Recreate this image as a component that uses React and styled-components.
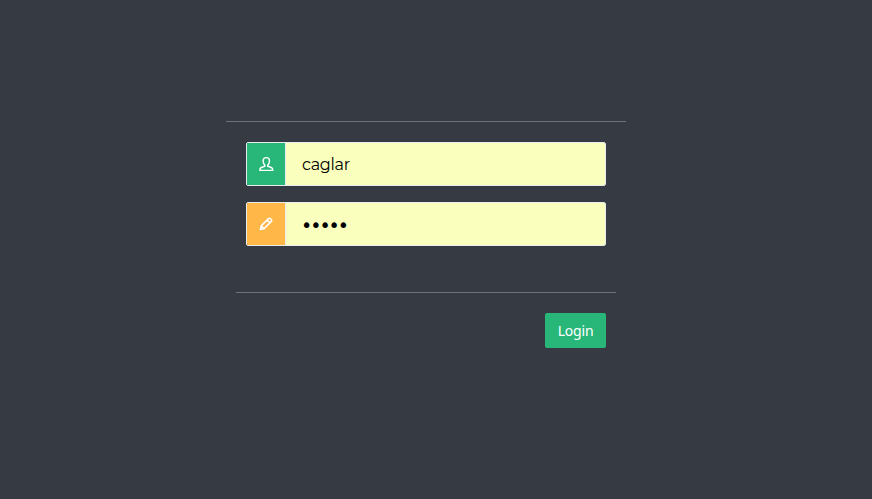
import React from "react";
import styled, { createGlobalStyle } from "styled-components";

const GlobalStyle = createGlobalStyle`
  * { box-sizing: border-box; }
  body { margin: 0; background: #363a42; font-family: "Noto Sans", sans-serif; }
`;

const Page = styled.main`
  height: 499px;
  padding: 121px 0 0 226px;
  background: #363a42;
`;

const LoginBox = styled.form`
  width: 400px;
  border-top: 1px solid #6c737e;
`;

const Fields = styled.div`
  display: grid;
  gap: 16px;
  padding: 20px 20px 0;
`;

const InputGroup = styled.label`
  display: flex;
  height: 44px;
  border: 1px solid #e9ecef;
  border-radius: 2px;
  overflow: hidden;
`;

const Addon = styled.span`
  display: flex;
  align-items: center;
  justify-content: center;
  width: 38px;
  flex: none;
  color: #fff;
  background: ${({ $color }) => $color};
`;

const Input = styled.input`
  flex: 1;
  min-width: 0;
  height: 42px;
  padding: 0 16px;
  border: 0;
  border-left: 1px solid #e9ecef;
  outline: 0;
  border-radius: 0;
  background: #faffbd;
  color: #000;
  font-family: Montserrat, "Open Sans", sans-serif;
  font-size: 16px;
  letter-spacing: -0.3px;
`;

const PasswordInput = styled(Input)`
  padding: 2px 15px 0;
  font-family: "DejaVu Sans", sans-serif;
  font-size: 19px;
  letter-spacing: -2px;
`;

const Actions = styled.div`
  display: flex;
  justify-content: flex-end;
  margin: 46px 10px 0;
  padding: 20px 10px;
  border-top: 1px solid #6c737e;
`;

const Button = styled.button`
  width: 61px;
  height: 35px;
  padding: 0 0 1px;
  border: 0;
  border-radius: 2px;
  background: #28b779;
  color: #fff;
  font: 14px "Noto Sans", sans-serif;
  letter-spacing: -0.2px;
`;

const Icon = styled.svg`
  display: block;
  width: 16px;
  height: 16px;
  fill: none;
  stroke: currentColor;
`;

const UserIcon = () => (
  <Icon viewBox="0 0 16 16" strokeWidth="1.4">
    <path d="M6.9 9.2C5.7 8.1 5.1 6.5 5.1 4.7C5.1 2.7 6.2 1.6 8.3 1.6S11.5 2.7 11.5 4.7C11.5 6.5 10.9 8.1 9.7 9.2V10.2L13.3 11.5Q14.8 12.2 14.8 14.4H1.8Q1.8 12.2 3.3 11.5L6.9 10.2Z" />
  </Icon>
);

const PencilIcon = () => (
  <Icon viewBox="0 0 16 16" strokeWidth="1.6" strokeLinejoin="round">
    <path d="M2.4 13.5L3.2 9.9L10.5 2.6Q11.5 1.7 12.9 3Q14.3 4.4 13.3 5.4L6 12.7ZM9.2 4.1L11.8 6.7M3.5 10.2L5.7 12.4" />
  </Icon>
);

export default function App() {
  return (
    <>
      <GlobalStyle />
      <Page>
        <LoginBox onSubmit={(event) => event.preventDefault()}>
          <Fields>
            <InputGroup>
              <Addon $color="#28b779"><UserIcon /></Addon>
              <Input type="text" aria-label="Username" defaultValue="caglar" />
            </InputGroup>
            <InputGroup>
              <Addon $color="#ffb848"><PencilIcon /></Addon>
              <PasswordInput type="password" aria-label="Password" defaultValue="admin" />
            </InputGroup>
          </Fields>
          <Actions>
            <Button type="submit">Login</Button>
          </Actions>
        </LoginBox>
      </Page>
    </>
  );
}
